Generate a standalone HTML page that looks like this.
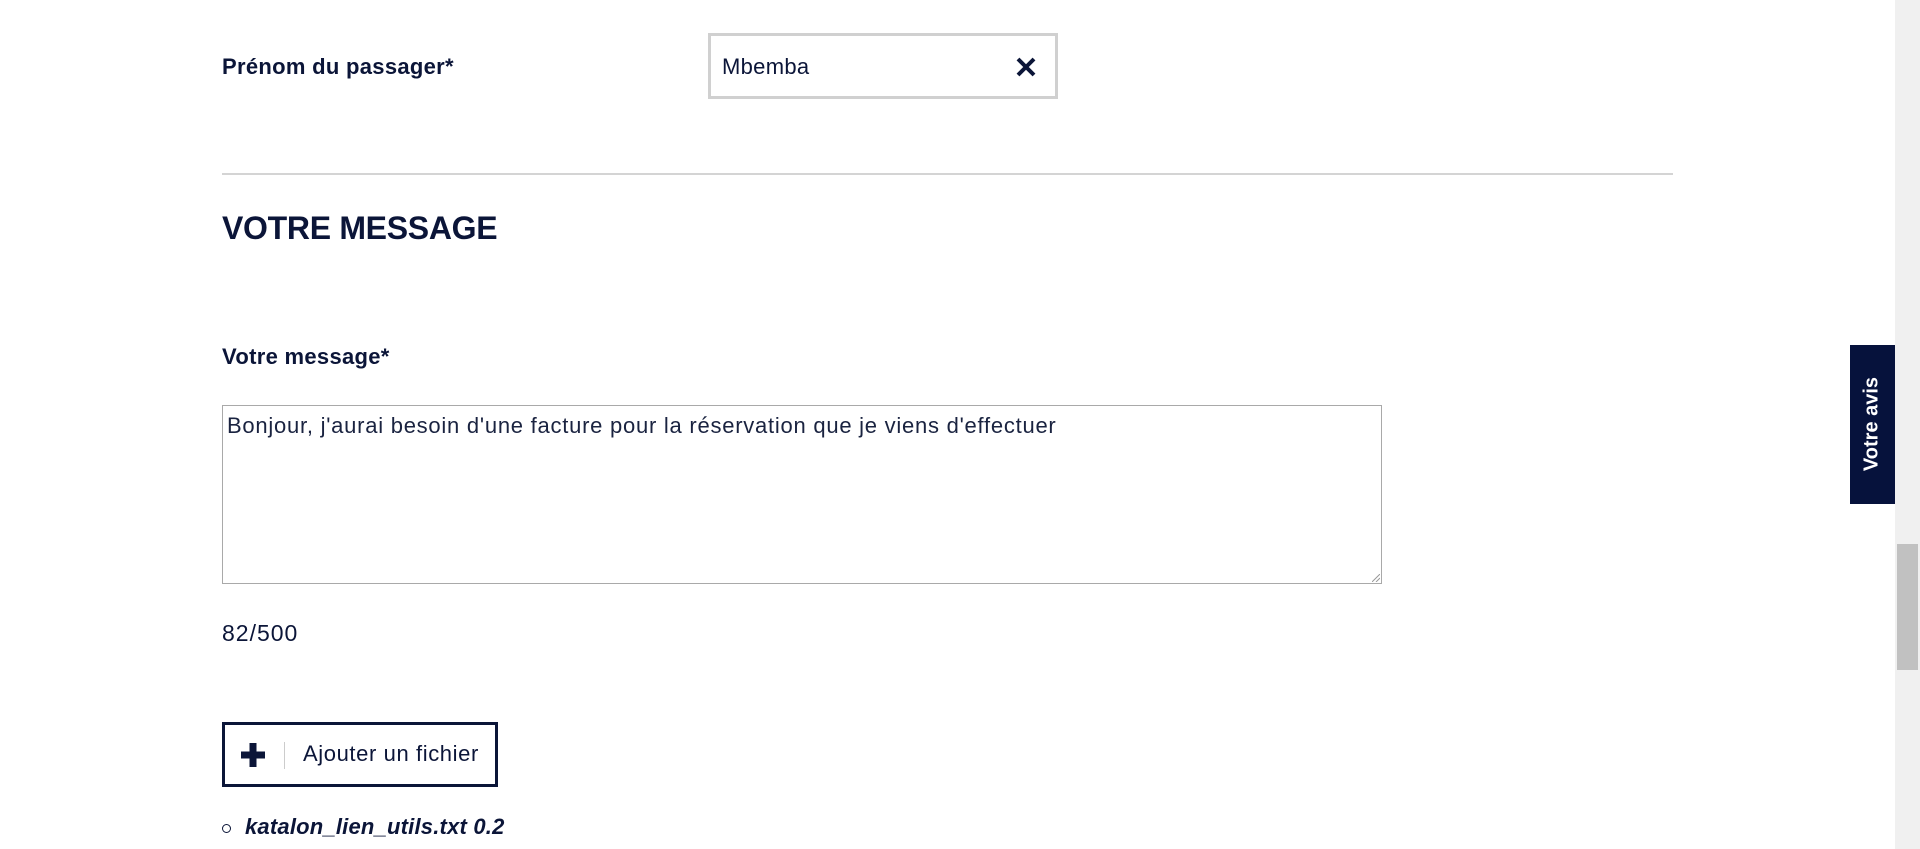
<!DOCTYPE html>
<html><head><meta charset="utf-8"><style>
*{margin:0;padding:0;box-sizing:border-box}
body{width:1920px;height:849px;background:#fff;position:relative;overflow:hidden;font-family:"Liberation Sans",sans-serif;color:#0b1538}
.a{position:absolute;white-space:nowrap}
</style></head><body>
<div class="a" style="left:222px;top:54px;font-size:22px;font-weight:bold;letter-spacing:0.3px">Prénom du passager*</div>
<div class="a" style="left:708px;top:33px;width:350px;height:66px;border:3px solid #d0d0d0"></div>
<div class="a" style="left:722px;top:54px;font-size:22px;letter-spacing:0.3px">Mbemba</div>
<svg class="a" style="left:1015px;top:56px" width="22" height="22" viewBox="0 0 22 22"><path d="M3 3L19 19M19 3L3 19" stroke="#0b1538" stroke-width="4"/></svg>
<div class="a" style="left:222px;top:173px;width:1451px;height:2px;background:#d4d4d4"></div>
<div class="a" style="left:222px;top:210px;font-size:32px;font-weight:bold;letter-spacing:-0.3px">VOTRE MESSAGE</div>
<div class="a" style="left:222px;top:344px;font-size:22px;font-weight:bold;letter-spacing:0.3px">Votre message*</div>
<div class="a" style="left:222px;top:405px;width:1160px;height:179px;border:1px solid #a9a9a9"></div>
<div class="a" style="left:227px;top:413px;font-size:22px;letter-spacing:0.75px;color:#1a2340">Bonjour, j'aurai besoin d'une facture pour la réservation que je viens d'effectuer</div>
<svg class="a" style="left:1372px;top:574px" width="8" height="8"><path d="M0 8L8 0M4 8L8 4" stroke="#999" stroke-width="1"/></svg>
<div class="a" style="left:222px;top:620px;font-size:23px;letter-spacing:1px">82/500</div>
<div class="a" style="left:222px;top:722px;width:276px;height:65px;border:3px solid #0b1538"></div>
<svg class="a" style="left:239px;top:741px" width="28" height="28" viewBox="0 0 28 28"><path d="M14 2V26M2 14H26" stroke="#0b1538" stroke-width="7"/></svg>
<div class="a" style="left:284px;top:742px;width:1px;height:27px;background:#ccc"></div>
<div class="a" style="left:303px;top:741px;font-size:22px;letter-spacing:0.6px">Ajouter un fichier</div>
<div class="a" style="left:222px;top:824px;width:9px;height:9px;border:1px solid #0b1538;border-radius:50%"></div>
<div class="a" style="left:245px;top:814px;font-size:22px;font-weight:bold;font-style:italic;letter-spacing:0.2px">katalon_lien_utils.txt 0.2</div>
<div class="a" style="left:1850px;top:345px;width:45px;height:159px;background:#06123c"></div>
<div class="a" style="left:1872px;top:424px;transform:translate(-50%,-50%) rotate(-90deg);color:#fff;font-size:20px;font-weight:bold">Votre avis</div>
<div class="a" style="left:1895px;top:0;width:25px;height:849px;background:#f0f0f0"></div>
<div class="a" style="left:1897px;top:544px;width:21px;height:126px;background:#c1c1c1"></div>
</body></html>
